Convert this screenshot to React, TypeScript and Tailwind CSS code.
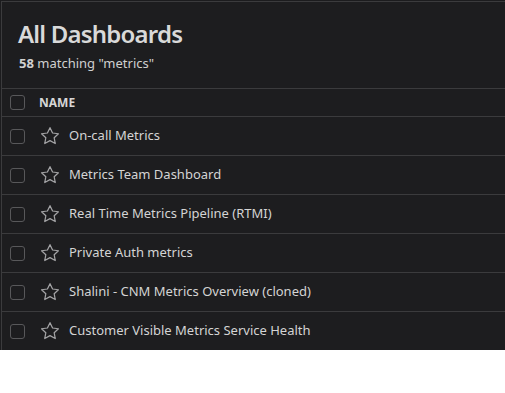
const rows = [
  'On-call Metrics',
  'Metrics Team Dashboard',
  'Real Time Metrics Pipeline (RTMI)',
  'Private Auth metrics',
  'Shalini - CNM Metrics Overview (cloned)',
  'Customer Visible Metrics Service Health',
];

function Checkbox() {
  return <div className="h-[15px] w-[15px] rounded-[3px] border-[1.5px] border-[#58585a]" />;
}

function Star() {
  return (
    <svg width="20" height="20" viewBox="0 0 24 24" fill="none" stroke="#a4a4a6" strokeWidth="1.5" strokeLinejoin="round">
      <path d="M12 2l3.1 6.4 7 .9-5.1 4.8 1.3 6.9L12 17.6 5.7 21l1.3-6.9L1.9 9.3l7-.9z" />
    </svg>
  );
}

export default function App() {
  return (
    <div className="w-[505px] h-[393px] bg-white" style={{ fontFamily: '"Noto Sans", "Open Sans", sans-serif' }}>
      <div className="bg-[#1c1c1e] pl-px pt-px">
        <div className="border-l border-t border-[#3b3b3d] bg-[#1d1d1f]">
          <div className="pl-[16px] pt-[16px] pb-[15px]">
            <h1 className="text-[24px] leading-[32px] font-semibold tracking-[-0.8px] text-[#d9d9d9]">All Dashboards</h1>
            <p className="text-[13px] leading-[20px] text-[#d0d0d0] mt-[3px] pl-[1px]">
              <span className="font-bold">58</span> matching "metrics"
            </p>
          </div>
          <div className="flex items-center h-[28px] border-t border-[#3b3b3d] pl-[8px]">
            <Checkbox />
            <span className="ml-[14px] text-[12px] font-bold text-[#d6d6d6]">NAME</span>
          </div>
          {rows.map((r) => (
            <div key={r} className="flex items-center h-[39px] border-t border-[#3b3b3d] pl-[8px]">
              <Checkbox />
              <span className="ml-[15px] flex"><Star /></span>
              <span className="ml-[9px] text-[13px] text-[#d4d4d4]">{r}</span>
            </div>
          ))}
        </div>
      </div>
    </div>
  );
}
